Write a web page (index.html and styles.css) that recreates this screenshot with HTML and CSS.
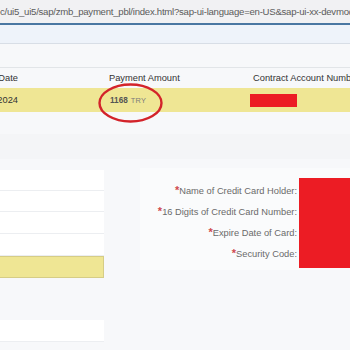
FILE: index.html
```html
<!DOCTYPE html>
<html>
<head>
<meta charset="utf-8">
<link rel="stylesheet" href="styles.css">
</head>
<body>
<div class="url">c/ui5_ui5/sap/zmb_payment_pbl/index.html?sap-ui-language=en-US&amp;sap-ui-xx-devmode=true</div>
<div class="accent"></div>
<div class="shellbar"></div>
<div class="page">
  <div class="table">
    <div class="row head">
      <div class="c1"><span>Date</span></div>
      <div class="c2">Payment Amount</div>
      <div class="c3"><span class="pad">Contract Account Number</span></div>
    </div>
    <div class="row data">
      <div class="c1"><span>12.02.2024</span></div>
      <div class="c2"><b class="amt">1168</b> <span class="cur">TRY</span></div>
      <div class="c3"><div class="redact-sm"></div></div>
    </div>
    <svg class="circle" width="67" height="42" viewBox="0 0 67 42"><ellipse cx="33.5" cy="21" rx="31" ry="18.5" fill="none" stroke="#d3232a" stroke-width="2.4"/></svg>
  </div>
  <div class="band"></div>
  <div class="forms">
    <div class="left">
      <div class="lrow"></div>
      <div class="lrow"></div>
      <div class="lrow tall"></div>
      <div class="lrow tall"></div>
      <div class="lrow tall yellow"></div>
      <div class="lrow tall gapped"></div>
    </div>
    <div class="card">
      <div class="lab"><span class="req">*</span>Name of Credit Card Holder:</div>
      <div class="redact"></div>
      <div class="lab"><span class="req">*</span>16 Digits of Credit Card Number:</div>
      <div class="lab"><span class="req">*</span>Expire Date of Card:</div>
      <div class="lab"><span class="req">*</span>Security Code:</div>
    </div>
  </div>
</div>
</body>
</html>
```
FILE: styles.css
```css
html, body { margin: 0; padding: 0; }
body { width: 350px; height: 350px; overflow: hidden; background: #f7f8fa; font-family: "Liberation Sans", Arial, sans-serif; }
.url { height: 23px; line-height: 24px; background: #f1f1f3; color: #5b5b5b; font-family: "Liberation Sans", Arial, sans-serif; font-size: 9.6px; letter-spacing: -0.25px; white-space: nowrap; overflow: hidden; }
.accent { height: 2px; background: #4a77a2; }
.shellbar { height: 18px; background: #eef3fa; border-bottom: 1px solid #d8dee6; }
.page { background: #f7f8fa; }
.table { position: relative; margin-top: 23px; border-top: 1px solid #e2e5e8; }
.row { display: grid; grid-template-columns: 18px 91px 141px 1fr; font-size: 9.3px; white-space: nowrap; }
.row > div { overflow: hidden; display: flex; align-items: center; min-width: 0; }
.c1 { grid-column: 1; justify-content: flex-end; }
.c2 { grid-column: 3; }
.c3 { grid-column: 4; }
.head { height: 20px; color: #333; }
.data { height: 24px; background: #efe694; color: #333; }
.data .c2 { padding-left: 1px; }
.pad { padding-left: 3px; }
.amt { font-size: 8.2px; color: #555; font-weight: bold; }
.cur { font-size: 7.4px; color: #7a7a7a; margin-left: 3px; letter-spacing: 0.2px; }
.redact-sm { width: 47px; height: 13px; background: #ec1c24; }
.circle { position: absolute; left: 97px; top: 14px; }
.band { height: 48px; background: linear-gradient(#f7f8fa 0, #f7f8fa 22px, #f4f5f7 22px, #f4f5f7 47px, #f7f8fa 47px); }
.forms { display: flex; align-items: flex-start; margin-top: 8px; }
.left { width: 104px; margin-top: 2px; }
.lrow { height: 20px; background: #fff; border-bottom: 1px solid #eceef1; }
.lrow.tall { height: 21px; }
.lrow.yellow { background: #efe694; border: 1px solid #d6cd86; border-left: none; height: 20px; }
.lrow.gapped { margin-top: 42px; }
.card { margin-left: 36px; width: 210px; height: 90px; padding-top: 12px; background: #fafbfc; display: grid; grid-template-columns: 157px 51px; column-gap: 2px; grid-template-rows: 21px 21px 21px 21px; }
.lab { grid-column: 1; text-align: right; font-size: 9.3px; color: #6a6a6a; line-height: 21px; white-space: nowrap; }
.req { color: #cf4a4f; font-size: 11px; font-weight: bold; }
.redact { grid-column: 2; grid-row: 1 / span 4; background: #ec1c24; margin-top: -2px; margin-bottom: -4px; }
```
